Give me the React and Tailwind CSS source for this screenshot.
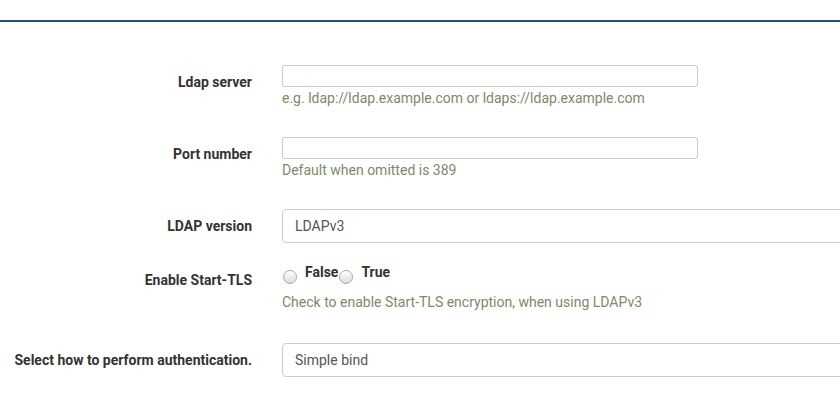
const Row = ({ label, children, className = "" }) => (
  <div className={`flex ${className}`}>
    <label className="w-[252px] shrink-0 text-right font-bold text-[14px] leading-5 text-[#333333] pt-[7px]">
      {label}
    </label>
    <div className="ml-[30px] flex-1 min-w-0">{children}</div>
  </div>
);

const Help = ({ children, className = "mt-[1px]" }) => (
  <p className={`${className} text-[14px] leading-5 text-[#7b8a6b]`}>{children}</p>
);

const Select = ({ value }) => (
  <div className="h-[34px] w-[600px] border border-[#cccccc] rounded-[4px] px-[12px] flex items-center text-[14px] text-[#555555]">
    {value}
  </div>
);

const Radio = ({ label }) => (
  <label className="flex items-start h-[20px]">
    <span className="mt-[8px] ml-[1px] w-[14px] h-[14px] rounded-full border border-[#a8a8a8] bg-gradient-to-b from-[#ffffff] to-[#dcdcdc]" />
    <span className="ml-[8px] font-bold text-[14px] leading-5 text-[#333333]">{label}</span>
  </label>
);

export default function App() {
  return (
    <div className="w-[840px] h-[393px] overflow-hidden bg-white" style={{ fontFamily: "Roboto, 'Liberation Sans', sans-serif" }}>
      <div className="h-[22px] border-b-2 border-[#24527a]" />
      <div className="pt-[41px]">
        <Row label="Ldap server" className="mt-[2px]">
          <input className="block w-[416px] h-[22px] border border-[#cccccc] rounded-[3px] outline-none" />
          <Help>e.g. ldap://ldap.example.com or ldaps://ldap.example.com</Help>
        </Row>
        <Row label="Port number" className="mt-[29px]">
          <input className="block w-[416px] h-[22px] border border-[#cccccc] rounded-[3px] outline-none" />
          <Help>Default when omitted is 389</Help>
        </Row>
        <Row label="LDAP version" className="mt-[29px]">
          <Select value="LDAPv3" />
        </Row>
        <Row label="Enable Start-TLS" className="mt-[20px]">
          <div className="flex -mt-[1px]">
            <Radio label="False" />
            <Radio label="True" />
          </div>
          <Help className="mt-[10px]">Check to enable Start-TLS encryption, when using LDAPv3</Help>
        </Row>
        <Row label="Select how to perform authentication." className="mt-[31px]">
          <Select value="Simple bind" />
        </Row>
      </div>
    </div>
  );
}
